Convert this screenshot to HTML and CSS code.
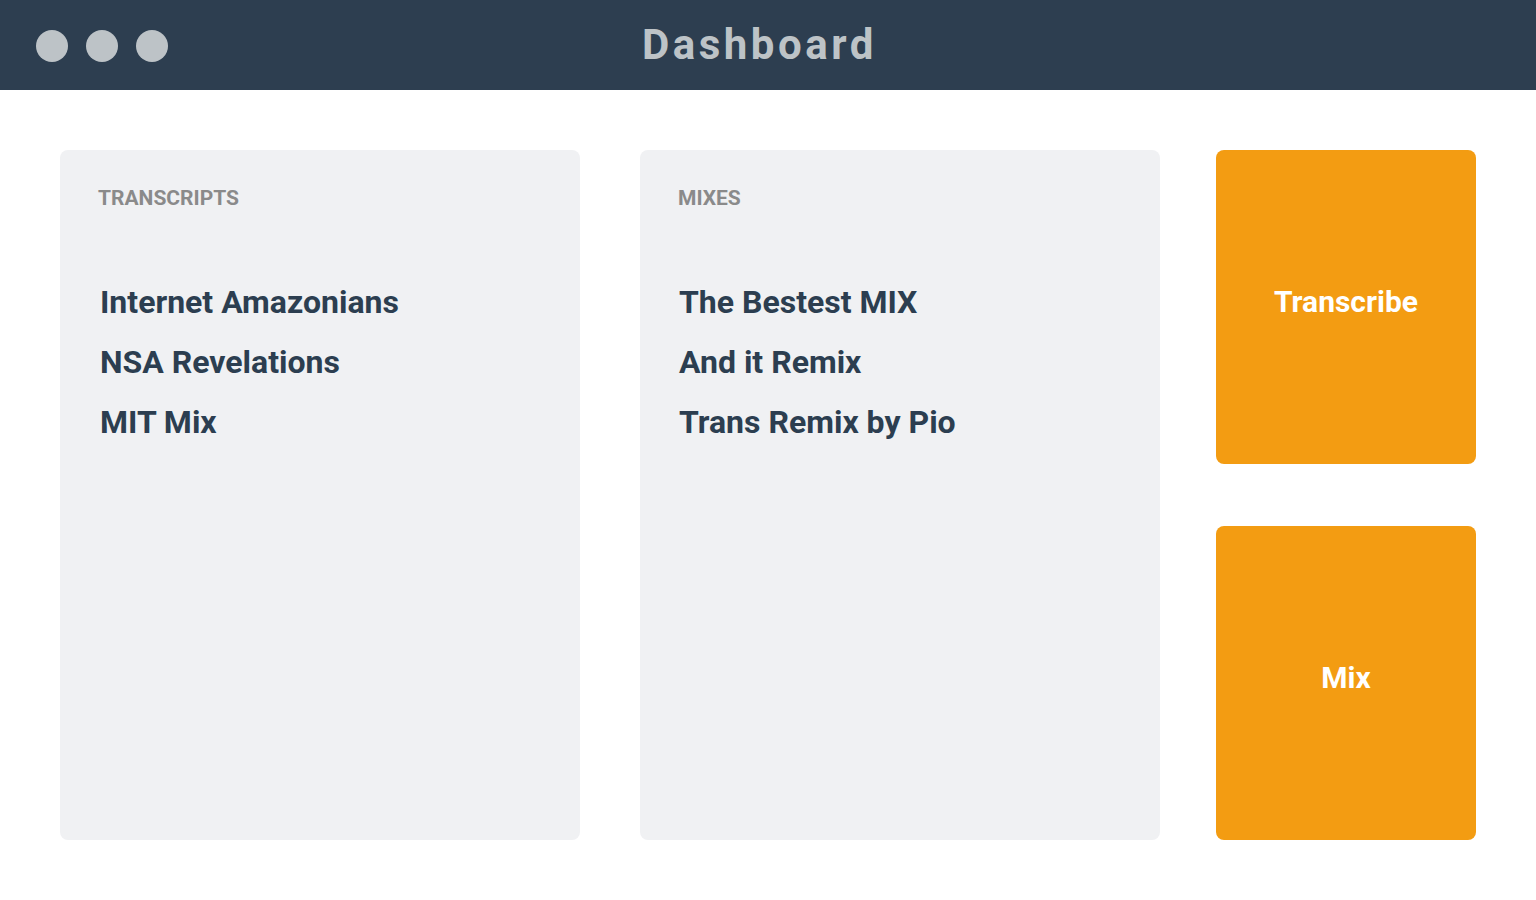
FILE: index.html
```html
<!DOCTYPE html><html>
<head>
  <meta name="viewport" content="width=device-width, initial-scale=1.0">
  <title>Dashboard</title>
  <link rel="stylesheet" href="styles.css">
</head><body>

<header class="topbar">
  <div class="dots"><span></span><span></span><span></span></div>
  <h1>Dashboard</h1>
</header>

<main class="board">
  <section class="card">
    <h2>TRANSCRIPTS</h2>
    <ul>
      <li>Internet Amazonians</li>
      <li>NSA Revelations</li>
      <li>MIT Mix</li>
    </ul>
  </section>
  <section class="card">
    <h2>MIXES</h2>
    <ul>
      <li>The Bestest MIX</li>
      <li>And it Remix</li>
      <li>Trans Remix by Pio</li>
    </ul>
  </section>
  <div class="actions">
    <button type="button">Transcribe</button>
    <button type="button">Mix</button>
  </div>
</main>

</body></html>
```

FILE: styles.css
```css
* { box-sizing: border-box; }
body {
  margin: 0;
  font-family: Roboto, "Liberation Sans", sans-serif;
  color: #2c3e50;
  background: #fff;
}
.topbar {
  height: 90px;
  background: #2d3e50;
  display: flex;
  align-items: center;
  padding: 0 36px;
}
.dots { display: flex; gap: 18px; margin-top: 2px; }
.dots span { width: 32px; height: 32px; border-radius: 50%; background: #bdc3c7; }
.topbar h1 {
  margin: 0 0 0 474px;
  font-size: 42px;
  font-weight: 700;
  letter-spacing: 3.5px;
  color: #bdc3c7;
  line-height: 1;
}
.board {
  display: flex;
  gap: 60px;
  padding: 60px;
}
.card {
  flex: 0 0 520px;
  height: 690px;
  background: #f0f1f3;
  border-radius: 8px;
  padding: 36px 38px;
}
.card h2 {
  margin: 0;
  font-size: 21px;
  font-weight: 700;
  color: #8a8a8a;
  line-height: 24px;
}
.card ul { list-style: none; margin: 62px 0 0 2px; padding: 0; }
.card + .card ul { margin-left: 1px; }
.card li {
  font-size: 32px;
  font-weight: 700;
  line-height: 60px;
  color: #2c3e50;
}
.actions {
  margin-left: -4px;
  flex: 0 0 260px;
  display: flex;
  flex-direction: column;
  gap: 62px;
}
.actions button {
  height: 314px;
  border: 0;
  border-radius: 8px;
  background: #f39c12;
  color: #fff;
  font-family: inherit;
  font-size: 30px;
  font-weight: 700;
  padding: 0 0 12px;
}
```
